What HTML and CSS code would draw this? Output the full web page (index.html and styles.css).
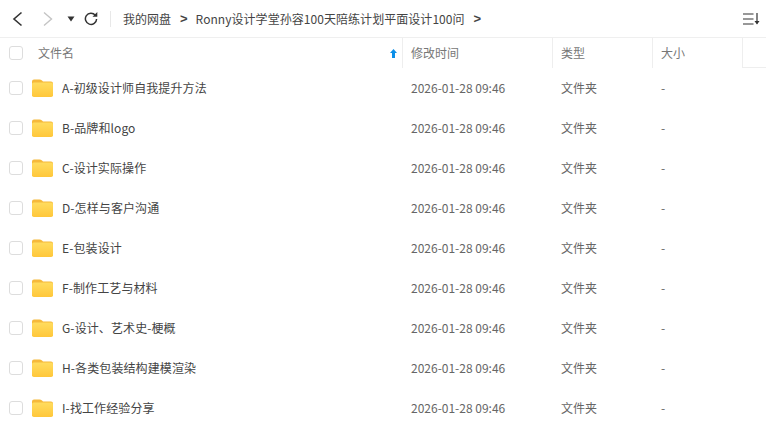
FILE: index.html
```html
<!DOCTYPE html>
<html lang="zh-CN">
<head>
    <meta charset="UTF-8">
    <title>我的网盘</title>
    <link rel="stylesheet" href="styles.css">
</head>
<body>
    <div class="toolbar">
        <svg class="nav-icon" width="14" height="16" viewBox="0 0 14 16"><path d="M10.500 1.500 3 8l7.500 6.500" fill="none" stroke="#333" stroke-width="1.600"/></svg>
        <svg class="nav-icon forward" width="14" height="16" viewBox="0 0 14 16"><path d="M3 1.500 10.500 8 3 14.500" fill="none" stroke="#c4c4c4" stroke-width="1.400"/></svg>
        <svg class="caret" width="8" height="6" viewBox="0 0 8 6"><path d="M.5.5h7L4 5.500z" fill="#333"/></svg>
        <svg class="refresh" width="14" height="14" viewBox="0 0 14 14"><path d="M11.300 3.200A5.600 5.600 0 1 0 12.600 7" fill="none" stroke="#333" stroke-width="1.500"/><path d="M8.500 4.700h4.800V0z" fill="#333"/></svg>
        <div class="divider"></div>
        <div class="crumbs">
            <span>我的网盘</span><b>&gt;</b>
            <span class="long">Ronny设计学堂孙容100天陪练计划平面设计100问</span><b>&gt;</b>
        </div>
        <svg class="sort-icon" width="17" height="12" viewBox="0 0 17 12"><path d="M0 1h10.500M0 6h10.500M0 11h10.500M14 0v10.500" fill="none" stroke="#333" stroke-width="1.200"/><path d="M11.500 8h5L14 11.500z" fill="#333"/></svg>
    </div>

    <div class="row head">
        <div class="check-cell"><span class="check"></span></div>
        <div class="col name">文件名<svg class="sort-up" width="7" height="9" viewBox="0 0 7 9"><path d="M3.500 0 7 4H5v5H2V4H0z" fill="#0b8fe8"/></svg></div>
        <div class="col time">修改时间</div>
        <div class="col type">类型</div>
        <div class="col size">大小</div>
        <div class="col rest"></div>
    </div>

    <svg width="0" height="0" class="defs">
        <defs>
            <linearGradient id="folder-front" x1="0" y1="0" x2="0" y2="1">
                <stop offset="0" stop-color="#ffdc5e"/>
                <stop offset="1" stop-color="#ffc73a"/>
            </linearGradient>
        </defs>
        <symbol id="folder" viewBox="0 0 21 18">
            <path d="M0 2.500Q0 .5 2 .5h5.500Q9 .5 10 1.600L11 2.500h8q2 0 2 2V6H0z" fill="#f6b93a"/>
            <rect y="3.500" width="21" height="14.500" rx="1.800" fill="url(#folder-front)"/>
        </symbol>
    </svg>

    <div class="row item"><div class="check-cell"><span class="check"></span></div><div class="col name"><svg class="folder"><use href="#folder"/></svg>A-初级设计师自我提升方法</div><div class="col time">2026-01-28 09:46</div><div class="col type">文件夹</div><div class="col size">-</div></div>
    <div class="row item"><div class="check-cell"><span class="check"></span></div><div class="col name"><svg class="folder"><use href="#folder"/></svg>B-品牌和logo</div><div class="col time">2026-01-28 09:46</div><div class="col type">文件夹</div><div class="col size">-</div></div>
    <div class="row item"><div class="check-cell"><span class="check"></span></div><div class="col name"><svg class="folder"><use href="#folder"/></svg>C-设计实际操作</div><div class="col time">2026-01-28 09:46</div><div class="col type">文件夹</div><div class="col size">-</div></div>
    <div class="row item"><div class="check-cell"><span class="check"></span></div><div class="col name"><svg class="folder"><use href="#folder"/></svg>D-怎样与客户沟通</div><div class="col time">2026-01-28 09:46</div><div class="col type">文件夹</div><div class="col size">-</div></div>
    <div class="row item"><div class="check-cell"><span class="check"></span></div><div class="col name"><svg class="folder"><use href="#folder"/></svg>E-包装设计</div><div class="col time">2026-01-28 09:46</div><div class="col type">文件夹</div><div class="col size">-</div></div>
    <div class="row item"><div class="check-cell"><span class="check"></span></div><div class="col name"><svg class="folder"><use href="#folder"/></svg>F-制作工艺与材料</div><div class="col time">2026-01-28 09:46</div><div class="col type">文件夹</div><div class="col size">-</div></div>
    <div class="row item"><div class="check-cell"><span class="check"></span></div><div class="col name"><svg class="folder"><use href="#folder"/></svg>G-设计、艺术史-梗概</div><div class="col time">2026-01-28 09:46</div><div class="col type">文件夹</div><div class="col size">-</div></div>
    <div class="row item"><div class="check-cell"><span class="check"></span></div><div class="col name"><svg class="folder"><use href="#folder"/></svg>H-各类包装结构建模渲染</div><div class="col time">2026-01-28 09:46</div><div class="col type">文件夹</div><div class="col size">-</div></div>
    <div class="row item"><div class="check-cell"><span class="check"></span></div><div class="col name"><svg class="folder"><use href="#folder"/></svg>I-找工作经验分享</div><div class="col time">2026-01-28 09:46</div><div class="col type">文件夹</div><div class="col size">-</div></div>
</body>
</html>
```

FILE: styles.css
```css
html, body {
    height: 100%;
}
body {
    margin: 0;
    overflow: hidden;
    background-color: #fff;
    color: #444;
    font-family: "Noto Sans CJK SC", "Liberation Sans", sans-serif;
    font-size: 12px;
}
.defs {
    position: absolute;
}
.toolbar {
    display: flex;
    align-items: center;
    height: 37px;
    padding-left: 11px;
}
.forward {
    margin-left: 16px;
}
.caret {
    margin-left: 12px;
}
.refresh {
    margin-left: 9px;
}
.divider {
    width: 1px;
    height: 16px;
    margin-left: 12px;
    background-color: #e8e8e8;
}
.crumbs {
    display: flex;
    align-items: center;
    flex: 1;
    margin-left: 12px;
    padding-bottom: 1px;
    color: #444;
}
.crumbs b {
    margin: 0 8px 0 9px;
    font-family: "Liberation Sans", sans-serif;
    font-size: 13px;
}
.crumbs .long {
    letter-spacing: 0.05px;
}
.sort-icon {
    margin-right: 6px;
}
.row {
    display: flex;
    align-items: center;
}
.head {
    height: 30px;
    border-top: 1px solid #efefef;
    color: #777;
}
.head .col {
    height: 100%;
    border-right: 1px solid #eee;
    display: flex;
    align-items: center;
}
.head .name {
    position: relative;
}
.sort-up {
    position: absolute;
    right: 5px;
    top: 11px;
}
.item {
    height: 40px;
}
.check-cell {
    width: 38px;
    flex: none;
    padding-left: 9px;
    box-sizing: border-box;
    display: flex;
}
.check {
    width: 12px;
    height: 12px;
    border: 1px solid #ddd;
    border-radius: 3px;
}
.col {
    box-sizing: border-box;
    flex: none;
    padding-bottom: 2px;
}
.name {
    width: 365px;
    display: flex;
    align-items: center;
}
.item .name {
    color: #444;
    letter-spacing: 0.1px;
}
.folder {
    width: 21px;
    height: 18px;
    margin: 2px 9px 0 -6px;
}
.time {
    width: 150px;
    padding-left: 8px;
}
.type {
    width: 100px;
    padding-left: 8px;
}
.size {
    width: 90px;
    padding-left: 8px;
}
.rest {
    border-bottom: 1px solid #eee;
    border-right: none !important;
    flex: 1;
}
.item .time, .item .type, .item .size {
    color: #666;
}
```
